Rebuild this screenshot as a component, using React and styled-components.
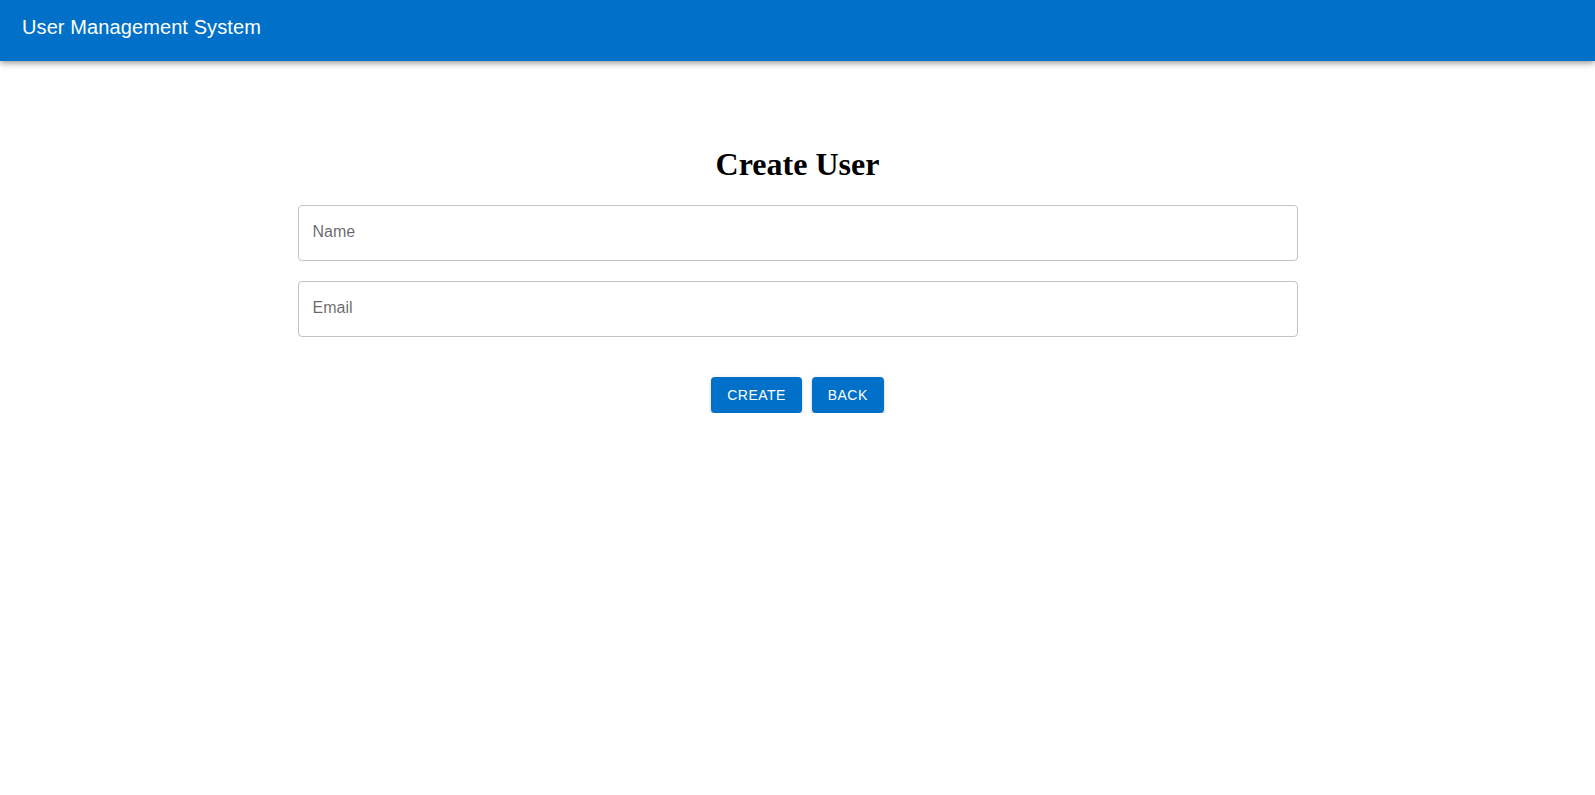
import React from "react";
import styled, { createGlobalStyle } from "styled-components";

const GlobalStyle = createGlobalStyle`
  html, body {
    margin: 0;
    padding: 0;
    background: #ffffff;
  }
  body {
    font-family: "Liberation Sans", Arial, Helvetica, sans-serif;
  }
  * {
    box-sizing: border-box;
  }
`;

const AppBar = styled.header`
  height: 61px;
  background: #0070c9;
  display: flex;
  align-items: flex-start;
  padding: 16px 22px 0;
  box-shadow: 0px 2px 4px -1px rgba(0, 0, 0, 0.2),
    0px 4px 5px 0px rgba(0, 0, 0, 0.14), 0px 1px 10px 0px rgba(0, 0, 0, 0.12);
  position: relative;
  z-index: 1;
`;

const AppTitle = styled.div`
  color: #ffffff;
  font-family: "Liberation Sans", Arial, Helvetica, sans-serif;
  font-size: 20px;
  line-height: 23px;
  font-weight: 400;
  letter-spacing: 0.1px;
`;

const Main = styled.main`
  width: 1000px;
  max-width: 100%;
  margin: 0 auto;
  padding-top: 85px;
`;

const Heading = styled.h1`
  margin: 0 0 22px;
  text-align: center;
  font-family: "Liberation Serif", "Times New Roman", serif;
  font-weight: 700;
  font-size: 32px;
  line-height: 37px;
  color: #000;
`;

const Form = styled.form`
  display: flex;
  flex-direction: column;
  gap: 20px;
`;

const Field = styled.input`
  display: block;
  width: 100%;
  height: 56px;
  border: 1px solid #c4c4c4;
  border-radius: 4px;
  padding: 0 14px 2px;
  font-family: "Liberation Sans", Arial, Helvetica, sans-serif;
  font-size: 16px;
  color: rgba(0, 0, 0, 0.87);
  background: #fff;
  outline: none;

  &::placeholder {
    color: rgba(0, 0, 0, 0.6);
    opacity: 1;
  }
`;

const Actions = styled.div`
  display: flex;
  justify-content: center;
  gap: 10px;
  margin-top: 40px;
`;

const Button = styled.button`
  height: 36px;
  padding: 0 16px;
  border: none;
  border-radius: 4px;
  background: #0070c9;
  color: #ffffff;
  font-family: "Liberation Sans", Arial, Helvetica, sans-serif;
  font-size: 14px;
  font-weight: 500;
  letter-spacing: 0.45px;
  text-transform: uppercase;
  cursor: pointer;
  box-shadow: 0px 3px 1px -2px rgba(0, 0, 0, 0.2),
    0px 2px 2px 0px rgba(0, 0, 0, 0.14), 0px 1px 5px 0px rgba(0, 0, 0, 0.12);
`;

export default function App() {
  return (
    <>
      <GlobalStyle />
      <AppBar>
        <AppTitle>User Management System</AppTitle>
      </AppBar>
      <Main>
        <Heading>Create User</Heading>
        <Form onSubmit={(e) => e.preventDefault()}>
          <Field type="text" placeholder="Name" />
          <Field type="email" placeholder="Email" />
        </Form>
        <Actions>
          <Button type="button">Create</Button>
          <Button type="button">Back</Button>
        </Actions>
      </Main>
    </>
  );
}
